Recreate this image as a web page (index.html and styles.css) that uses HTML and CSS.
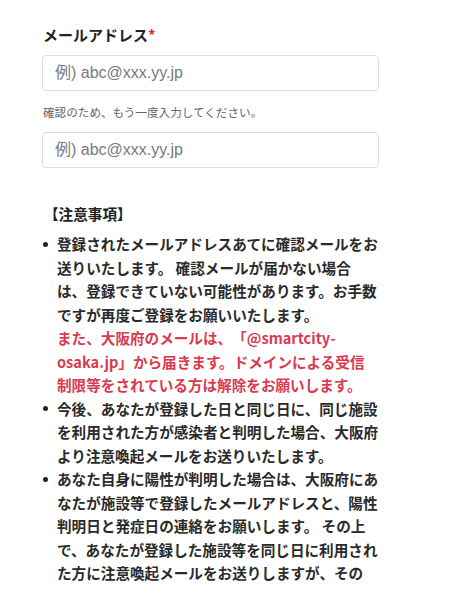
FILE: index.html
```html
<!DOCTYPE html>
<html lang="ja">
<head>
<meta charset="utf-8">
<link rel="stylesheet" href="styles.css">
</head>
<body>
<main class="form">
  <div class="field">
    <label class="label">メールアドレス<span class="req">*</span></label>
    <input class="input" type="email" placeholder="例) abc@xxx.yy.jp">
    <p class="help">確認のため、もう一度入力してください。</p>
    <input class="input" type="email" placeholder="例) abc@xxx.yy.jp">
  </div>
  <section class="notes">
    <h3 class="notes-title">【注意事項】</h3>
    <ul class="notes-list">
      <li>登録されたメールアドレスあてに確認メールをお送りいたします。 確認メールが届かない場合は、登録できていない可能性があります。お手数ですが再度ご登録をお願いいたします。<p class="warn">また、大阪府のメールは、「@smartcity-osaka.jp」から届きます。ドメインによる受信制限等をされている方は解除をお願いします。</p></li>
      <li>今後、あなたが登録した日と同じ日に、同じ施設を利用された方が感染者と判明した場合、大阪府より注意喚起メールをお送りいたします。</li>
      <li>あなた自身に陽性が判明した場合は、大阪府にあなたが施設等で登録したメールアドレスと、陽性判明日と発症日の連絡をお願いします。 その上で、あなたが登録した施設等を同じ日に利用された方に注意喚起メールをお送りしますが、その</li>
    </ul>
  </section>
</main>
</body>
</html>
```
FILE: styles.css
```css
* { box-sizing: border-box; }
html, body { margin: 0; padding: 0; background: #fff; }
body {
  font-family: "Liberation Sans", "Noto Sans CJK JP", sans-serif;
  color: #222;
  overflow: hidden;
  text-spacing-trim: space-all;
}
.form {
  padding: 25px 0 0 42px;
  width: 380px;
}
.field {
  display: flex;
  flex-direction: column;
}
.label {
  font-family: "Noto Sans CJK JP", sans-serif;
  font-weight: 700;
  font-size: 15px;
  line-height: 20px;
  color: #222;
  margin-bottom: 10px;
  padding-left: 1px;
}
.req { color: #e02828; }
.input {
  width: 337px;
  height: 36px;
  border: 1px solid #dcdcdc;
  border-radius: 4px;
  padding: 0 12px;
  font-family: "Liberation Sans", "Noto Sans CJK JP", sans-serif;
  font-size: 16px;
  color: #222;
  background: #fff;
  outline: none;
}
.input::placeholder { color: #767a82; }
.help {
  margin: 13px 0 12px 1px;
  font-family: "Noto Sans CJK JP", sans-serif;
  font-size: 11.6px;
  line-height: 16px;
  color: #666;
}
.notes {
  margin-top: 36px;
  font-family: "Noto Sans CJK JP", sans-serif;
}
.notes-title {
  margin: 0 0 0 2px;
  font-size: 14.6px;
  font-weight: 700;
  line-height: 20px;
  color: #222;
}
.notes-list {
  list-style: none;
  margin: 8px 0 0 0;
  padding: 0 0 0 15px;
  width: 337.5px;
}
.notes-list li {
  position: relative;
  font-size: 14.6px;
  font-weight: 700;
  line-height: 23.5px;
  color: #2a2a2a;
  line-break: strict;
}
.notes-list li::before {
  content: "";
  position: absolute;
  left: -14px;
  top: 9.5px;
  width: 5px;
  height: 5px;
  border-radius: 50%;
  background: #222;
}
.warn {
  margin: 0;
  width: 318px;
  color: #d93a4f;
}
```
